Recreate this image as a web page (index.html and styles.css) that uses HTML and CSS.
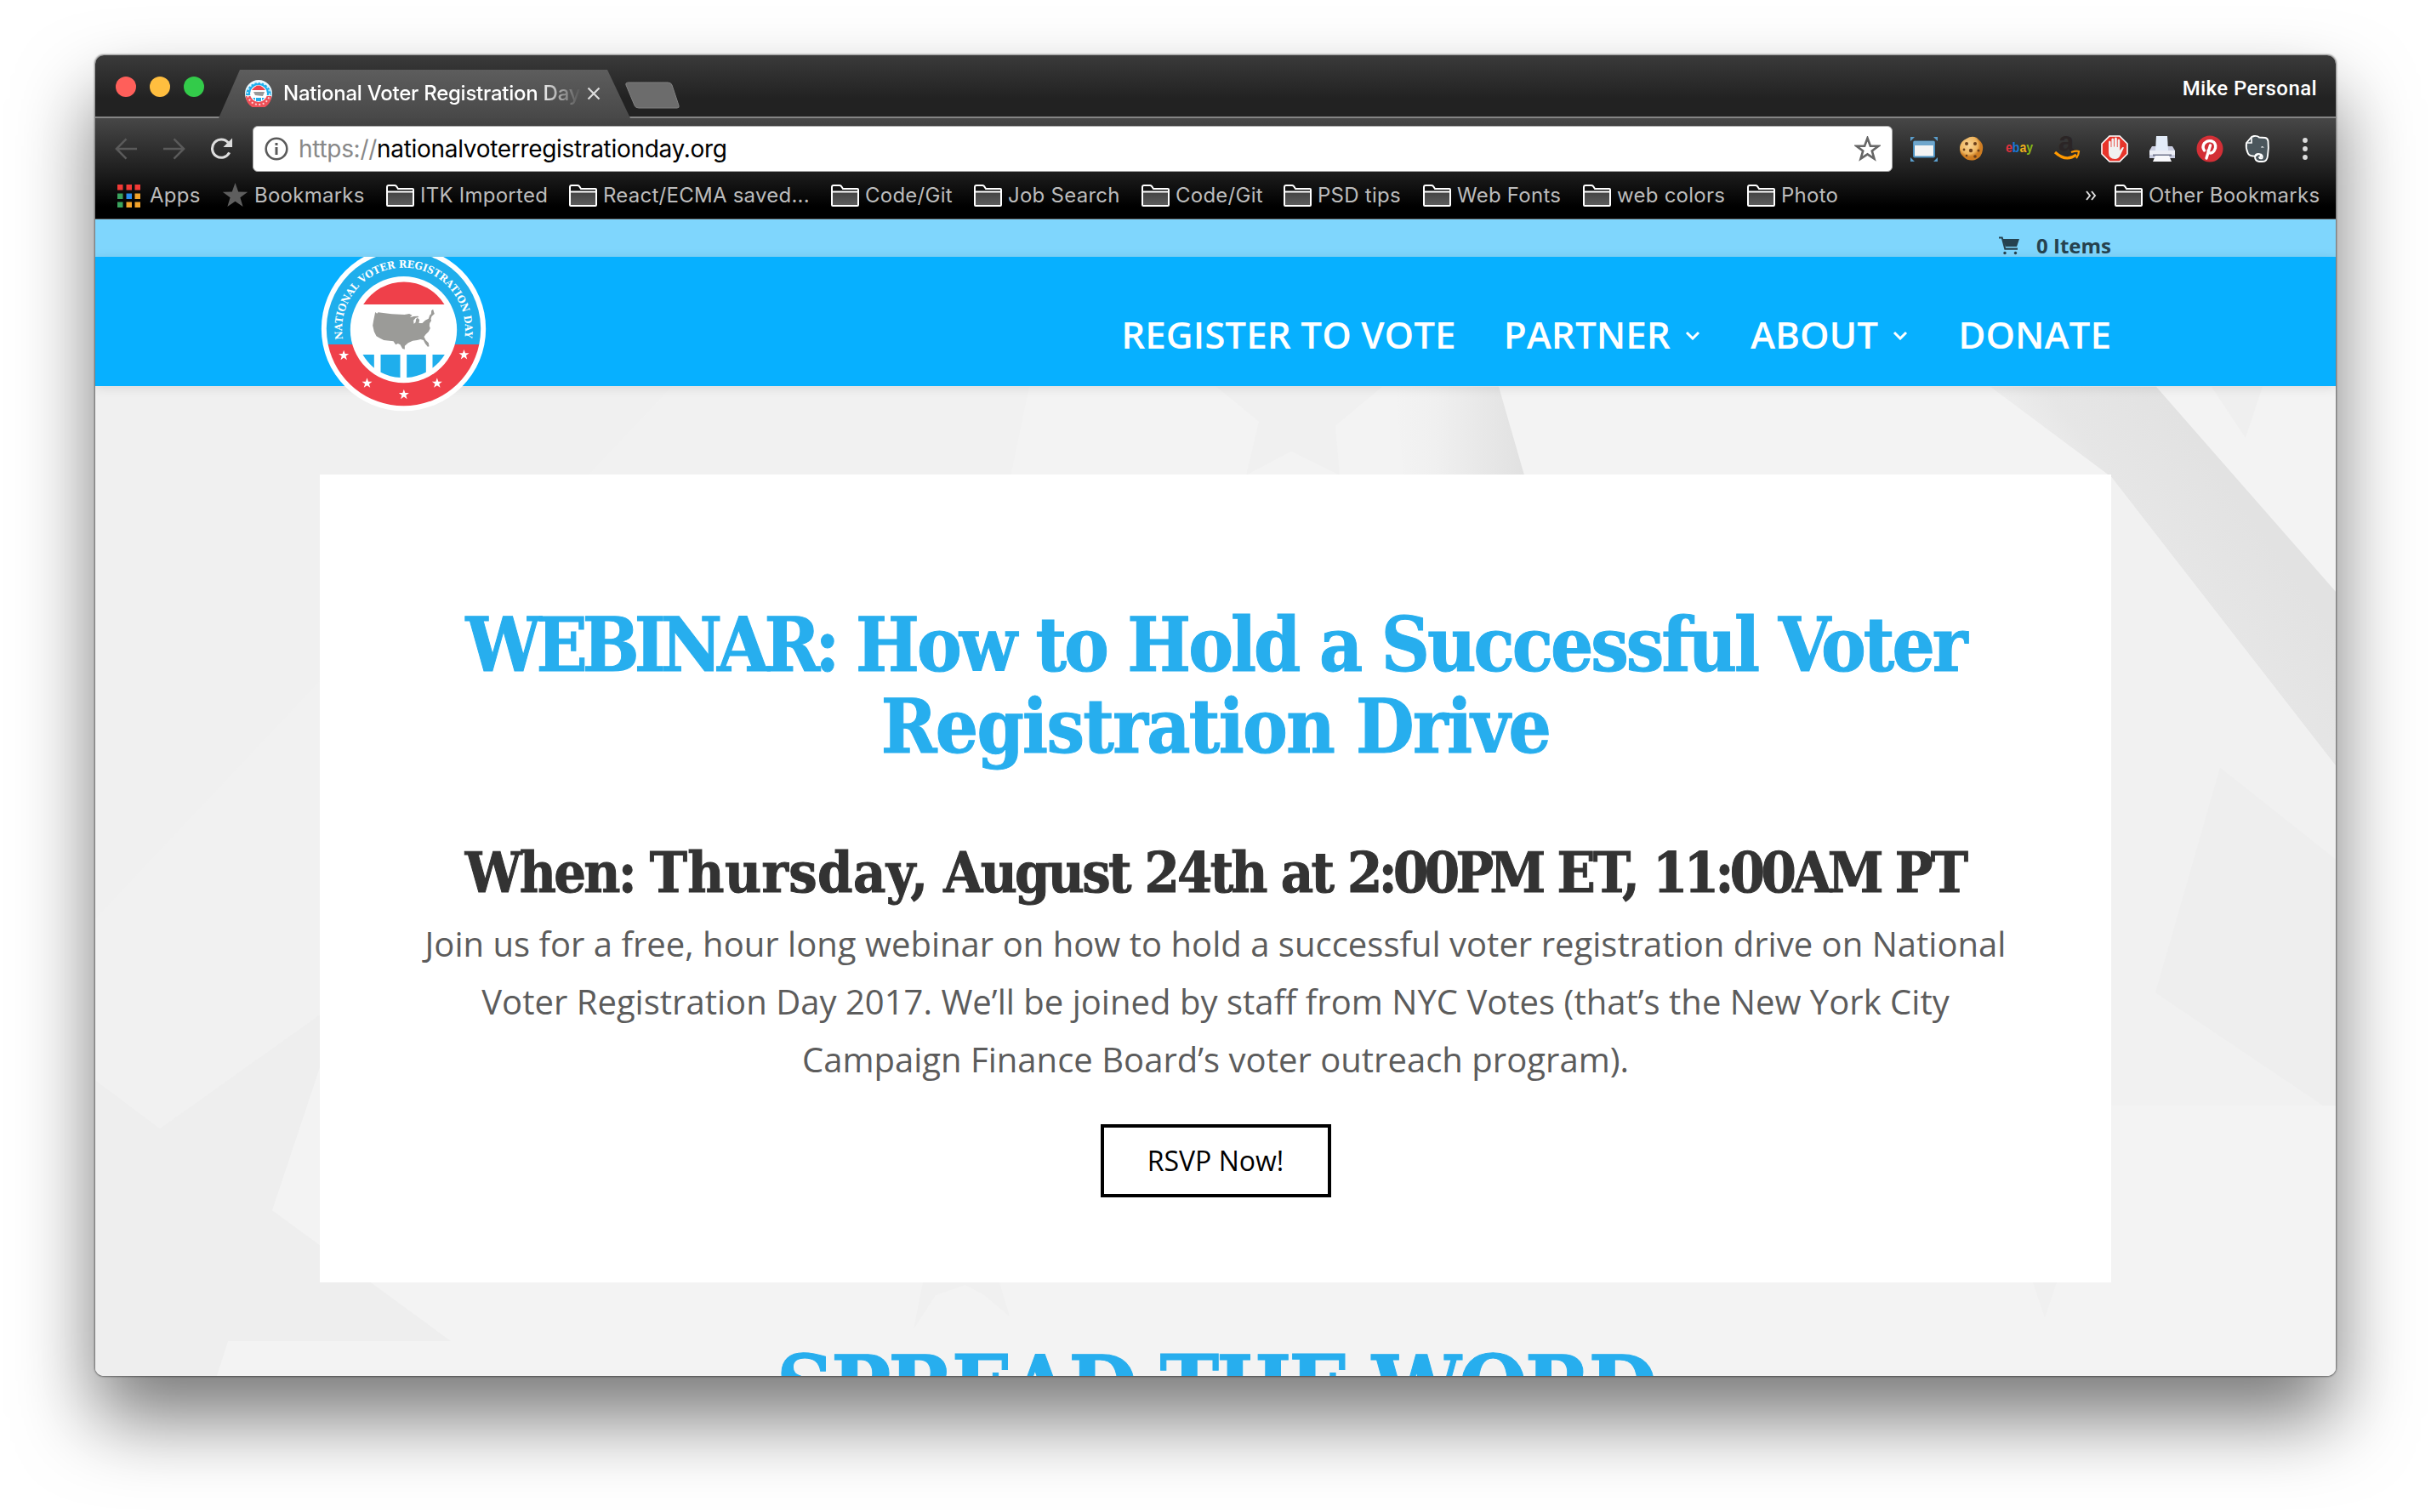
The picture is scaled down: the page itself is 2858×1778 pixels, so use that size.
FILE: index.html
```
<!DOCTYPE html>
<html lang="en">
<head>
<meta charset="utf-8">
<title>National Voter Registration Day</title>
<link rel="stylesheet" href="styles.css">
</head>
<body>
<svg width="0" height="0" class="defs">
  <symbol id="folder" viewBox="0 0 33 26">
    <defs><linearGradient id="fg" x1="0" y1="0" x2="0" y2="1"><stop offset="0" stop-color="#444"/><stop offset="1" stop-color="#5c5c5c"/></linearGradient></defs>
    <path d="M1 24V3q0-2 2-2h7q1 0 2 1l2 3h17q1 0 1 1v18q0 1-1 1H2q-1 0-1-1z" fill="#111" stroke="#fff" stroke-width="2"/>
    <path d="M2 9h29v15H2z" fill="url(#fg)"/><path d="M1 8.500h31" stroke="#fff" stroke-width="2"/>
  </symbol>
  <symbol id="star" viewBox="-10 -10 20 20"><path d="M0-10 2.400-3.200 9.500-3.100 3.800 1.200 5.900 8.100 0 4-5.900 8.100-3.800 1.200-9.500-3.100-2.400-3.200z"/></symbol>
  <symbol id="badge" viewBox="50 28 584 584">
    <circle cx="342" cy="320" r="290" fill="#fff"/>
    <path d="M75.600 375A272 272 0 1 1 608.400 375z" fill="#1faeec"/>
    <path d="M75.600 375A272 272 0 0 0 608.400 375z" fill="#ef404a"/>
    <circle cx="342" cy="323" r="188" fill="#fff"/>
    <path d="M200 234A168 168 0 0 1 486 234z" fill="#ef404a"/>
    <path d="M198 411h40v47A170 170 0 0 1 198 411zM261 411h69v81A170 170 0 0 1 261 473zM353 411h68v62A170 170 0 0 1 353 492zM444 411h43A170 170 0 0 1 444 458z" fill="#1faeec"/>
    <path d="M242 261L248 266 252 262 300 268 345 270 362 267 372 272 364 280 378 276 392 275 396 279 385 281 377 290 378 302 384 298 386 286 391 281 398 288 396 300 408 300 418 290 430 284 434 272 439 268 440 256 446 251 449 262 451 267 441 276 438 286 440 291 434 300 433 310 436 318 430 330 420 340 414 348 420 360 430 370 432 382 427 383 418 372 412 360 402 357 390 360 374 362 358 370 346 380 346 392 338 390 330 376 322 372 314 376 306 364 292 362 272 360 256 352 246 346 238 330 233 308 236 290z" fill="#9b9b98"/>
  </symbol>
</svg>
<div class="window">
  <div class="titlebar">
    <div class="lights"><i class="red"></i><i class="yellow"></i><i class="green"></i></div>
    <div class="tab">
      <svg class="favicon" viewBox="0 0 32 32"><circle cx="16" cy="16" r="16" fill="#eaf6fc"/><path d="M1 18A15 15 0 0 1 31 18z" fill="#1faeec"/><path d="M1 19A15 15 0 0 0 31 19z" fill="#ef5058"/><circle cx="16" cy="16" r="13" fill="none" stroke="#fff" stroke-width="2" stroke-dasharray="2 2.500" opacity=".75"/><circle cx="16" cy="16" r="10" fill="#fff"/><path d="M8 12q8-11 16 0z" fill="#ef404a"/><path d="M10 14h13l-2 5-9-1z" fill="#999"/><path d="M9 21h3v3zM13 21h6v4h-6zM20 21h3l-3 3z" fill="#1faeec"/></svg>
      <span class="tab-title">National Voter Registration Day</span>
      <svg class="close" viewBox="0 0 16 16"><path d="M1.500 1.500l13 13M14.500 1.500l-13 13" stroke="#ddd" stroke-width="2.200"/></svg>
    </div>
    <svg class="newtab" viewBox="0 0 66 32"><path d="M5 1h46q4 0 5 3l8 24q1 3-2 3H17q-4 0-5-3L2 4Q1 1 5 1z" fill="#6c6c6c" stroke="#808080"/></svg>
    <span class="profile">Mike Personal</span>
  </div>
  <div class="chrome">
    <div class="toolbar">
      <svg class="nav-ico" viewBox="0 0 28 26"><path d="M27 13H3M14 1 2 13l12 12" fill="none" stroke="#5a5a5a" stroke-width="2.600"/></svg>
      <svg class="nav-ico" viewBox="0 0 28 26"><path d="M1 13h24M14 1l12 12-12 12" fill="none" stroke="#5a5a5a" stroke-width="2.600"/></svg>
      <svg class="nav-ico" viewBox="0 0 28 26"><path d="M23.500 17.500A11 11 0 1 1 22 5.500" fill="none" stroke="#ddd" stroke-width="3.200"/><path d="M27 0v11H16z" fill="#ddd"/></svg>
      <div class="omnibox">
        <svg class="info" viewBox="0 0 28 28"><circle cx="14" cy="14" r="12.300" fill="none" stroke="#5a5a5a" stroke-width="2.600"/><path d="M14 12v9M14 7v3" stroke="#5a5a5a" stroke-width="3"/></svg>
        <span class="url"><em>https://</em>nationalvoterregistrationday.org</span>
        <svg class="fav" viewBox="-10.500 -10.500 21 20"><path d="M0-9 2.300-2.800 8.700-2.700 3.600 1.200 5.400 7.400 0 3.800-5.400 7.400-3.600 1.200-8.700-2.700-2.300-2.800z" fill="none" stroke="#666" stroke-width="1.800"/></svg>
      </div>
      <div class="exts">
        <svg viewBox="0 0 32 32"><path d="M0 2h5L0 7zM32 2h-5l5 5zM0 31h5l-5-5zM32 31h-5l5-5z" fill="#5a9dcb"/><rect x="4" y="7.500" width="24" height="18" rx="1" fill="#f4f4f4" stroke="#4a90c0" stroke-width="2"/><path d="M4 7h24v5H4z" fill="#6fa6cc"/></svg>
        <svg viewBox="0 0 32 32"><defs><radialGradient id="ck" cx=".4" cy=".35"><stop offset="0" stop-color="#f8d598"/><stop offset=".75" stop-color="#eeb45e"/><stop offset="1" stop-color="#cf7d22"/></radialGradient></defs><path d="M10 4q6-4 12-1l3 3q5 4 4 11-1 9-9 12-8 2-13-3-6-5-5-12 1-7 8-10z" fill="url(#ck)"/><g fill="#6b3f1c"><circle cx="10" cy="10" r="2"/><circle cx="20" cy="10" r="2"/><circle cx="15" cy="18" r="2.200"/><circle cx="24" cy="18" r="1.500"/><circle cx="7" cy="17" r="1.400"/><circle cx="20" cy="25" r="1.800"/><circle cx="10" cy="24" r="1.300"/></g></svg>
        <svg viewBox="0 0 32 32"><text x="0" y="20" class="ebay" textLength="32" lengthAdjust="spacingAndGlyphs"><tspan fill="#e5323e">e</tspan><tspan fill="#1a78d8">b</tspan><tspan fill="#f1b01c">a</tspan><tspan fill="#84b817">y</tspan></text></svg>
        <svg viewBox="0 0 32 32"><text x="6" y="19" class="amazon">a</text><path d="M2 20q13 12 25 3" fill="none" stroke="#f90" stroke-width="3.200"/><path d="M21 20q6-2 9-1 0 4-3 8" fill="none" stroke="#f90" stroke-width="2.200"/></svg>
        <svg viewBox="0 0 32 32"><path d="M10 1h12l9 9v12l-9 9H10l-9-9V10z" fill="#e8352b" stroke="#fff" stroke-width="1.600"/><path d="M9 18V8q0-1.500 1.300-1.500T11.600 8v6h.8V5q0-1.500 1.400-1.500T15.200 5v8.500h.8V4q0-1.500 1.400-1.500T18.800 4v10h.8V6q0-1.500 1.300-1.500T22.200 6v12l2.300-3q1-1.500 2.500-.5L22.500 24q-2 4-6 4Q9 28 9 20z" fill="#f1f1f1"/></svg>
        <svg viewBox="0 0 32 32"><path d="M4 13h24l3 5v9H1v-9z" fill="#c9cde0"/><path d="M9 1h13l1 17H8z" fill="#e2ebf8"/><path d="M1 18h30v5H1z" fill="#eceef6"/><path d="M5 22.500h22v2H5z" fill="#70758c"/><path d="M8 24h16l3 7H5z" fill="#f8f8fb"/></svg>
        <svg viewBox="0 0 32 32"><circle cx="16" cy="16" r="15.500" fill="#d32f36"/><path d="M12 27l4.500-15M9.500 18q-3-4 0-8.500 4-4 9-2.500 5 2 4 8-2 6-6 6-2.500 0-2.500-3" fill="none" stroke="#fff" stroke-width="3.400" stroke-linecap="round"/></svg>
        <svg viewBox="0 0 32 32"><path d="M3 9 9 2 12 1q4-.5 6 1.500l7 .5q3 .5 3.500 4 1 8-.5 17-.5 7-6 7h-4q-5-.5-5-6 .5-3 4-3 3 0 3 3l-2 1q1 2 3.500 1 1-3-1.500-4.500-3-1-4.500.5-1 2-5 1.500-5-.5-6-4Q2 15 3 9z" fill="#4b565c" stroke="#fff" stroke-width="1.900" stroke-linejoin="round"/><path d="M4 9h5V3" fill="none" stroke="#fff" stroke-width="1.600"/><path d="M20 14.500q1-3 4 0z" fill="#fff"/></svg>
      </div>
      <svg class="dots" viewBox="0 0 6 26" fill="#ddd"><circle cx="3" cy="3" r="2.900"/><circle cx="3" cy="13" r="2.900"/><circle cx="3" cy="23" r="2.900"/></svg>
    </div>
    <div class="bookmarks">
      <div class="bm apps"><svg class="grid-ico" viewBox="0 0 27 27"><path d="M0 0h6.500v6.500H0zM10.500 0H17v6.500h-6.500zM20.500 0H27v6.500h-6.500z" fill="#f23a36"/><path d="M0 10.500h6.500V17H0zM0 20.500h6.500V27H0z" fill="#3aa35d"/><path d="M10.500 10.500H17V17h-6.500z" fill="#2a8cf0"/><path d="M20.500 10.500H27V17h-6.500zM10.500 20.500H17V27h-6.500zM20.500 20.500H27V27h-6.500z" fill="#f2a32b"/></svg><span>Apps</span></div>
      <div class="bm"><svg class="star-ico" fill="#5e5e5e"><use href="#star"/></svg><span>Bookmarks</span></div>
      <div class="bm"><svg class="folder"><use href="#folder"/></svg><span>ITK Imported</span></div>
      <div class="bm"><svg class="folder"><use href="#folder"/></svg><span>React/ECMA saved...</span></div>
      <div class="bm"><svg class="folder"><use href="#folder"/></svg><span>Code/Git</span></div>
      <div class="bm"><svg class="folder"><use href="#folder"/></svg><span>Job Search</span></div>
      <div class="bm"><svg class="folder"><use href="#folder"/></svg><span>Code/Git</span></div>
      <div class="bm"><svg class="folder"><use href="#folder"/></svg><span>PSD tips</span></div>
      <div class="bm"><svg class="folder"><use href="#folder"/></svg><span>Web Fonts</span></div>
      <div class="bm"><svg class="folder"><use href="#folder"/></svg><span>web colors</span></div>
      <div class="bm"><svg class="folder"><use href="#folder"/></svg><span>Photo</span></div>
      <svg class="more" viewBox="0 0 13 12"><path d="M1 1l4 5-4 5M7 1l4 5-4 5" fill="none" stroke="#ddd" stroke-width="2"/></svg>
      <div class="bm"><svg class="folder"><use href="#folder"/></svg><span>Other Bookmarks</span></div>
    </div>
  </div>
  <div class="page">
    <svg class="backdrop" viewBox="112 257 2634 1361" preserveAspectRatio="none">
      <defs>
        <linearGradient id="b1" x1="0" x2="1"><stop offset="0" stop-color="#f3f3f3"/><stop offset=".3" stop-color="#f0f0f0"/><stop offset="1" stop-color="#e1e1e1"/></linearGradient>
        <linearGradient id="b2" gradientUnits="userSpaceOnUse" x1="2400" y1="600" x2="2560" y2="485"><stop offset="0" stop-color="#f3f3f3"/><stop offset=".45" stop-color="#e6e6e6"/><stop offset="1" stop-color="#e2e2e2"/></linearGradient>
      </defs>
      <path d="M112 257h2634v1361H112z" fill="#f3f3f3"/>
      <path d="M112 454H790L690 560 376 800V1193L188 1327 112 1270z" fill="#f0f0f0"/>
      <path d="M376 800 112 1080V1270L188 1327 376 1193z" fill="#f1f1f1"/>
      <path d="M112 1270 188 1327 376 1193V1255L320 1423 530 1577H268L255 1618H112z" fill="#eee"/>
      <path d="M790 454H1210L1188 560H690z" fill="#f1f1f1"/>
      <path d="M1430 454H1625L1570 500 1575 558 1518 530 1465 558 1480 495z" fill="#f0f0f0"/>
      <path d="M1640 454h122l30 104H1650z" fill="url(#b1)"/>
      <path d="M2340 454h195L2746 695V900L2482 560z" fill="url(#b2)"/>
      <path d="M2482 560 2746 900V1300H2482z" fill="#f1f1f1"/>
      <path d="M2610 902 2746 1010V1310L2534 1167z" fill="#eee"/>
      <path d="M2482 1300h264v318H2482z" fill="#f3f3f3"/>
      <path d="M1085 1508h90l12 40-30-25-22-12-35 12-26 40zM2390 1508h28l-14 42z" fill="#f0f0f0"/>
      <path d="M2600 454h60l-20 60z" fill="#efefef"/>
    </svg>
    <div class="topbar">
      <svg class="cart" viewBox="0 0 24 22"><path d="M0 .500h4.500L8 13.500h14v2.200H6.500L3 2.500H0zM5 3h19l-3 9H7.800z" fill="#26424f"/><circle cx="7" cy="19.500" r="1.700" fill="#26424f"/><circle cx="19.500" cy="19.500" r="1.700" fill="#26424f"/></svg>
      <span>0 Items</span>
    </div>
    <header class="header">
      <div class="logo">
        <svg viewBox="50 66 584 546" class="logo-svg">
          <defs><path id="arc" d="M128 357A217 217 0 1 1 556 357"/></defs>
          <use href="#badge" x="50" y="28" width="584" height="584"/>
          <text class="ring"><textPath href="#arc" textLength="748" lengthAdjust="spacingAndGlyphs">NATIONAL VOTER REGISTRATION DAY</textPath></text>
          <g fill="#fff"><use href="#star" x="112" y="395" width="38" height="38"/><use href="#star" x="194" y="493" width="38" height="38"/><use href="#star" x="324" y="533" width="38" height="38"/><use href="#star" x="441" y="493" width="38" height="38"/><use href="#star" x="536" y="393" width="38" height="38"/></g>
        </svg>
      </div>
      <nav class="menu">
        <a>REGISTER TO VOTE</a>
        <a>PARTNER<svg class="chev" viewBox="0 0 18 11"><path d="M2 2l7 7 7-7" fill="none" stroke="#fff" stroke-width="3"/></svg></a>
        <a>ABOUT<svg class="chev" viewBox="0 0 18 11"><path d="M2 2l7 7 7-7" fill="none" stroke="#fff" stroke-width="3"/></svg></a>
        <a>DONATE</a>
      </nav>
    </header>
    <main class="main">
      <section class="card">
        <h1><span class="l1"><span class="caps">WEBINAR:</span> How to Hold a Successful Voter</span><br><span class="l2">Registration Drive</span></h1>
        <h2>When: <span class="wide">Thursday,</span> August 24th at <span class="tight">2:00PM</span> ET, <span class="tight">11:00AM</span> PT</h2>
        <p>Join us for a free, hour long webinar on how to hold a successful voter registration drive on National<br>Voter Registration Day 2017. We’ll be joined by staff from NYC Votes (that’s the New York City<br>Campaign Finance Board’s voter outreach program).</p>
        <a class="rsvp">RSVP Now!</a>
      </section>
      <div class="spread">SPREAD THE WORD</div>
    </main>
  </div>
</div>
</body>
</html>
```
FILE: styles.css
```
* { box-sizing: border-box; }
body {
  margin: 0;
  width: 2858px;
  height: 1778px;
  padding: 65px 112px 0;
  background: #fff;
  overflow: hidden;
  font-family: Inter, Roboto, sans-serif;
}
svg { display: block; flex: none; }
.defs { position: absolute; }
.window {
  width: 2634px;
  height: 1553px;
  border-radius: 10px;
  overflow: hidden;
  display: flex;
  flex-direction: column;
  box-shadow: 0 0 2px 1px rgba(0,0,0,.45), 0 50px 90px rgba(0,0,0,.53);
}
.titlebar {
  height: 74px;
  flex: none;
  display: flex;
  align-items: flex-end;
  background: linear-gradient(#3a3a3a, #222 70%);
  border-bottom: 2px solid #858585;
}
.lights { display: flex; gap: 16px; padding: 0 0 23px 24px; width: 145px; }
.lights i { width: 24px; height: 24px; border-radius: 50%; }
.red { background: #ff5f5a; }
.yellow { background: #ffbe3f; }
.green { background: #33cb4a; }
.tab {
  width: 484px;
  height: 57px;
  margin-bottom: -2px;
  padding: 0 31px 2px;
  display: flex;
  align-items: center;
  background: linear-gradient(#5d5d5d, #484848);
  clip-path: polygon(25px 0, 457px 0, 484px 100%, 0 100%);
}
.favicon { width: 32px; height: 32px; }
.tab-title {
  width: 350px;
  margin-left: 13px;
  overflow: hidden;
  white-space: nowrap;
  color: #fff;
  font-size: 24px;
  line-height: 32px;
  font-weight: 500;
  letter-spacing: -.25px;
  -webkit-mask-image: linear-gradient(90deg, #000 300px, transparent 350px);
  mask-image: linear-gradient(90deg, #000 300px, transparent 350px);
}
.close { width: 16px; height: 16px; margin-left: 7px; }
.newtab { width: 66px; height: 32px; margin: 0 0 9px -7px; }
.profile {
  margin-left: auto;
  padding: 0 22px 18px 0;
  color: #fff;
  font: 500 24px/30px Roboto, sans-serif;
  letter-spacing: .4px;
}
.chrome {
  height: 118px;
  flex: none;
  background: linear-gradient(#474747, #1e1e1e 53%, #000 88%);
}
.toolbar { height: 71px; display: flex; align-items: center; padding: 0 33px 0 23px; }
.nav-ico { width: 27px; height: 26px; margin-right: 29px; }
.omnibox {
  width: 1928px;
  height: 54px;
  margin-left: -5px;
  padding: 0 13px 0 13px;
  display: flex;
  align-items: center;
  border-radius: 6px;
  border: 1px solid #aaa;
  background: #fff;
}
.nav-ico:nth-child(3) { margin-right: 28px; }
.info { width: 28px; height: 28px; }
.url { margin-left: 12px; font-size: 28px; line-height: 34px; letter-spacing: -.3px; color: #000; }
.url em { font-style: normal; color: #888; }
.fav { width: 31px; height: 30px; margin-left: auto; }
.exts { display: flex; gap: 24px; margin-left: 21px; }
.exts svg { width: 32px; height: 32px; overflow: visible; }
.ebay { font: bold 17px "Liberation Sans", sans-serif; }
.amazon { font: bold 33px "Liberation Sans", sans-serif; fill: #2b2526; }
.dots { width: 6px; height: 26px; margin-left: auto; }
.bookmarks {
  height: 40px;
  display: grid;
  grid-template-columns: 123px 193px 215px 308px 168px 197px 167px 164px 188px 193px 398px 34px auto;
  align-items: center;
  padding-left: 26px;
}
.bm { display: flex; align-items: center; gap: 7px; font-size: 24px; line-height: 30px; letter-spacing: .25px; color: #bcbcbc; white-space: nowrap; }
.apps { gap: 11px; }
.grid-ico { width: 27px; height: 27px; }
.star-ico { width: 31px; height: 31px; }
.folder { width: 33px; height: 26px; }
.more { width: 13px; height: 12px; }
.page {
  position: relative;
  flex: 1;
  display: flex;
  flex-direction: column;
  border-top: 1px solid #555;
  overflow: hidden;
}
.backdrop { position: absolute; inset: 0; width: 100%; height: 100%; }
.topbar {
  position: relative;
  height: 44px;
  flex: none;
  display: flex;
  justify-content: flex-end;
  align-items: center;
  gap: 20px;
  padding: 18px 264px 0 0;
  background: #7fd6fd;
  color: #26424f;
  font: bold 24px/26px "Open Sans", sans-serif;
}
.cart { width: 24px; height: 22px; }
.header {
  position: relative;
  height: 152px;
  flex: none;
  display: flex;
  justify-content: space-between;
  align-items: flex-start;
  padding: 0 264px;
  background: #07b0ff;
  box-shadow: 0 2px 12px rgba(0,0,0,.1);
}
.logo-svg { width: 195px; height: 182px; margin-left: 1px; }
.ring { font: bold 36px "DejaVu Serif", serif; fill: #fff; }
.menu {
  display: flex;
  align-items: flex-start;
  gap: 56px;
  padding-top: 61px;
  color: #fff;
  font: 600 44px/60px "Open Sans", sans-serif;
}
.menu a { display: flex; align-items: center; white-space: nowrap; }
.chev { width: 18px; height: 11px; margin: 2px 3px 0 17px; }
.main { position: relative; padding: 104px 264px 0; text-align: center; }
.card { height: 950px; background: #fff; padding-top: 152px; display: flex; flex-direction: column; align-items: center; }
h1, h2, .spread {
  margin: 0;
  font-family: "DejaVu Serif Condensed", "DejaVu Serif", serif;
  font-stretch: condensed;
  font-weight: bold;
  color: #27aeee;
  white-space: nowrap;
  -webkit-text-stroke: 1px currentColor;
}
h1 { font-size: 88px; line-height: 96px; }
.l1 { letter-spacing: -3px; }
.caps { letter-spacing: -6px; }
.l2 { letter-spacing: -1.7px; }
h2 { margin-top: 88px; font-size: 66px; line-height: 72px; letter-spacing: -2.75px; color: #333; }
.wide { letter-spacing: .4px; }
.tight { letter-spacing: -4.6px; }
p { margin: 14px 0 42px; font: 40px/68px "Open Sans", sans-serif; letter-spacing: .02px; color: #5c5c5c; white-space: nowrap; }
.rsvp {
  width: 271px;
  height: 86px;
  border: 4px solid #000;
  font: 32px/78px "Open Sans", sans-serif;
  color: #000;
}
.spread { margin-top: 73px; font-size: 104px; line-height: 104px; letter-spacing: -3.2px; }
```
